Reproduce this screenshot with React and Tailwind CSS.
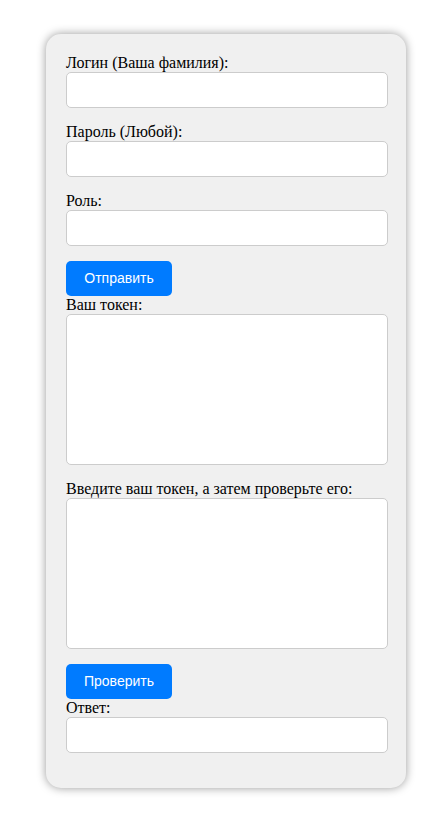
const serif = { fontFamily: '"Liberation Serif", "Times New Roman", serif' };

function Field({ label, tall }) {
  return (
    <div className="mb-[15px]">
      <label className="block text-[16px] leading-[18px] text-black">{label}</label>
      {tall ? (
        <textarea className="block w-[322px] h-[151px] bg-white border border-[#cccccc] rounded-[5px] resize-none outline-none" />
      ) : (
        <input type="text" className="block w-[322px] h-[36px] bg-white border border-[#cccccc] rounded-[5px] outline-none" />
      )}
    </div>
  );
}

function Button({ children }) {
  return (
    <button
      className="block h-[35px] w-[106px] bg-[#007bff] text-white text-[14px] rounded-[5px]"
      style={{ fontFamily: '"Liberation Sans", Arial, sans-serif' }}
    >
      {children}
    </button>
  );
}

export default function App() {
  return (
    <div className="min-h-[816px] bg-white pt-[34px]" style={serif}>
      <div className="ml-[46px] w-[360px] bg-[#f0f0f0] rounded-[15px] p-[20px] shadow-[0_0_10px_rgba(0,0,0,0.4)]">
        <Field label="Логин (Ваша фамилия):" />
        <Field label="Пароль (Любой):" />
        <Field label="Роль:" />
        <Button>Отправить</Button>
        <Field label="Ваш токен:" tall />
        <Field label="Введите ваш токен, а затем проверьте его:" tall />
        <Button>Проверить</Button>
        <Field label="Ответ:" />
      </div>
    </div>
  );
}
